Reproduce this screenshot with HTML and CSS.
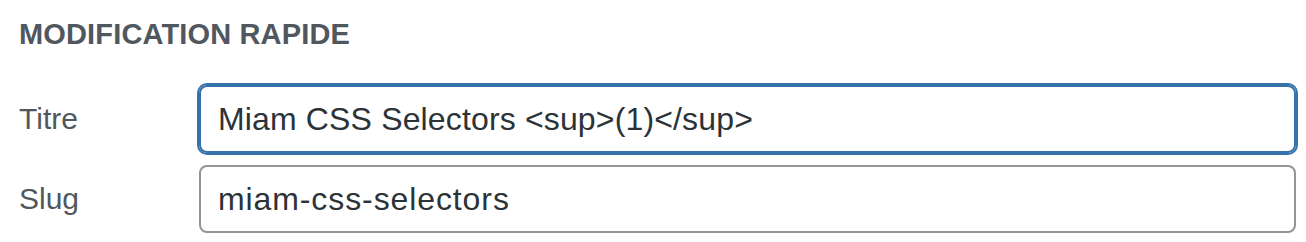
FILE: index.html
```html
<!DOCTYPE html>
<html lang="fr">
<head>
<meta charset="utf-8">
<title>Modification rapide</title>
<link rel="stylesheet" href="styles.css">
</head>
<body>
<fieldset class="quick-edit">
  <legend class="legend">Modification rapide</legend>
  <div class="fields">
    <div class="row">
      <span class="label">Titre</span>
      <div class="field is-focused">Miam CSS Selectors &lt;sup&gt;(1)&lt;/sup&gt;</div>
    </div>
    <div class="row">
      <span class="label">Slug</span>
      <div class="field field--slug">miam-css-selectors</div>
    </div>
  </div>
</fieldset>
</body>
</html>
```
FILE: styles.css
```css
html, body {
  margin: 0;
  padding: 0;
  background: #ffffff;
}

body {
  font-family: "Liberation Sans", Arial, sans-serif;
  -webkit-font-smoothing: antialiased;
}

.quick-edit {
  margin: 0;
  border: 0;
  padding: 0 10px 0 19px;
  min-width: 0;
}

.legend {
  float: left;
  width: 100%;
  padding: 17px 0 0;
  margin: 0;
  font-size: 29px;
  line-height: 34px;
  font-weight: 700;
  letter-spacing: 0.15px;
  text-transform: uppercase;
  color: #50575e;
}

.fields {
  clear: both;
  display: flex;
  flex-direction: column;
  gap: 12px;
  padding-top: 34px;
}

.row {
  display: grid;
  grid-template-columns: 180px 1fr;
  align-items: center;
}

.label {
  font-size: 30px;
  line-height: 34px;
  color: #50575e;
}

.field {
  box-sizing: border-box;
  height: 68px;
  display: flex;
  align-items: center;
  padding: 0 17px;
  border: 2px solid #939398;
  border-radius: 8px;
  font-size: 32px;
  letter-spacing: 0.15px;
  color: #2c3338;
  white-space: nowrap;
}

.field--slug {
  letter-spacing: 0.9px;
}

.field.is-focused {
  border-color: #3672ab;
  box-shadow: 0 0 0 2px #3672ab;
}
```
